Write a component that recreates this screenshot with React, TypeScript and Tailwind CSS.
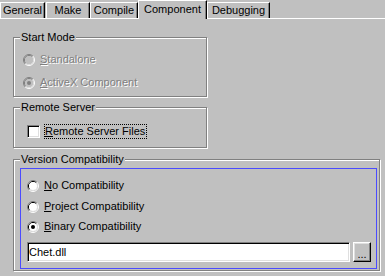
import React from "react";

const tabs = [
  { label: "General", w: "w-[45px]", gap: "" },
  { label: "Make", w: "w-[44px]", gap: "ml-px" },
  { label: "Compile", w: "w-[48px]", gap: "" },
  { label: "Component", w: "w-[69px]", gap: "", active: true },
  { label: "Debugging", w: "w-[63px]", gap: "" },
];

function Radio({ checked, disabled }: { checked?: boolean; disabled?: boolean }) {
  return (
    <svg width="12" height="12" viewBox="0 0 12 12" className="shrink-0">
      <path d="M2.11 9.89 A5.5 5.5 0 0 1 9.89 2.11" fill="none" stroke="#808080" />
      <path d="M9.89 2.11 A5.5 5.5 0 0 1 2.11 9.89" fill="none" stroke="#ffffff" />
      <path d="M2.82 9.18 A4.5 4.5 0 0 1 9.18 2.82" fill="none" stroke={disabled ? "#808080" : "#000000"} />
      <path d="M9.18 2.82 A4.5 4.5 0 0 1 2.82 9.18" fill="none" stroke="#dfdfdf" />
      <circle cx="6" cy="6" r="4" fill={disabled ? "#c0c0c0" : "#ffffff"} />
      {checked && <circle cx="6" cy="6" r="2" fill={disabled ? "#808080" : "#000000"} />}
    </svg>
  );
}

function Option({ label, acc, checked, disabled, gap }: { label: string; acc: string; checked?: boolean; disabled?: boolean; gap: string }) {
  const rest = label.slice(acc.length);
  return (
    <div className="flex h-[15px] items-center">
      <Radio checked={checked} disabled={disabled} />
      <span
        className={
          gap +
          " leading-[13px] " +
          (disabled ? "text-[#808080] [text-shadow:1px_1px_0_#ffffff]" : "text-black")
        }
      >
        <span className="underline underline-offset-1">{acc}</span>
        {rest}
      </span>
    </div>
  );
}

function Group({ title, className, children }: { title: string; className: string; children: React.ReactNode }) {
  return (
    <fieldset
      className={
        "m-0 min-w-0 border border-[#808080] p-0 shadow-[1px_1px_0_#ffffff,inset_1px_1px_0_#ffffff] " + className
      }
    >
      <legend className="ml-[6px] bg-[#c0c0c0] px-px text-[11px] leading-[13px] text-black">{title}</legend>
      {children}
    </fieldset>
  );
}

export default function App() {
  return (
    <div className="h-[276px] w-[385px] overflow-hidden bg-[#c0c0c0] font-['Liberation_Sans',Arial,sans-serif] text-[11px] text-black">
      {/* tab strip */}
      <div className="flex h-[19px] items-end border-b border-white">
        {tabs.map((t) =>
          t.active ? (
            <div
              key={t.label}
              className={
                t.w +
                " relative z-10 -mb-px flex h-[19px] items-start justify-center border-l border-t border-white bg-[#c0c0c0] pt-[2px] shadow-[inset_-1px_0_0_#808080] border-r border-r-black leading-[13px]"
              }
            >
              {t.label}
            </div>
          ) : (
            <div
              key={t.label}
              className={
                t.w +
                " " +
                t.gap +
                " flex h-[16px] items-center justify-center border-l border-t border-white border-r border-r-black shadow-[inset_-1px_0_0_#808080] leading-[13px]"
              }
            >
              {t.label}
            </div>
          )
        )}
      </div>

      <div className="flex flex-col pl-[13px] pt-[12px]">
        <Group title="Start Mode" className="h-[66px] w-[194px]">
          <div className="flex flex-col pl-[9px] pt-[8px]">
            <Option label="Standalone" acc="S" disabled gap="ml-[5px]" />
            <div className="mt-[8px]">
              <Option label="ActiveX Component" acc="A" checked disabled gap="ml-[5px]" />
            </div>
          </div>
        </Group>

        <Group title="Remote Server" className="mt-[4px] h-[47px] w-[194px]">
          <div className="flex h-[15px] items-center pl-[13px] mt-[10px]">
            <div className="h-[13px] w-[13px] shrink-0 border border-b-white border-l-[#808080] border-r-white border-t-[#808080] bg-white shadow-[inset_1px_1px_0_#000000,inset_-1px_-1px_0_#dfdfdf]" />
            <span className="ml-[4px] border border-dotted border-black pr-px leading-[13px]">
              <span className="underline underline-offset-1">R</span>emote Server Files
            </span>
          </div>
        </Group>

        <Group title="Version Compatibility" className="mt-[5px] h-[118px] w-[367px]">
          <div className="ml-[6px] mt-[2px] flex h-[101px] w-[357px] flex-col border border-[#4b4bff] pl-[6px] pt-[9px]">
            <Option label="No Compatibility" acc="N" gap="ml-[5px]" />
            <div className="mt-[6px]">
              <Option label="Project Compatibility" acc="P" gap="ml-[5px]" />
            </div>
            <div className="mt-[5px]">
              <Option label="Binary Compatibility" acc="B" checked gap="ml-[5px]" />
            </div>
            <div className="mt-[8px] flex h-[20px] items-stretch">
              <div className="flex w-[323px] items-center border border-b-white border-l-[#808080] border-r-white border-t-[#808080] bg-white pl-[1px] shadow-[inset_1px_1px_0_#000000,inset_-1px_-1px_0_#dfdfdf]">
                <span className="leading-[13px]">Chet.dll</span>
              </div>
              <div className="ml-[3px] flex w-[18px] items-end justify-center border border-b-black border-l-white border-r-black border-t-white pb-[2px] shadow-[inset_-1px_-1px_0_#808080,inset_1px_1px_0_#dfdfdf] leading-[10px]">
                ...
              </div>
            </div>
          </div>
        </Group>
      </div>
    </div>
  );
}
